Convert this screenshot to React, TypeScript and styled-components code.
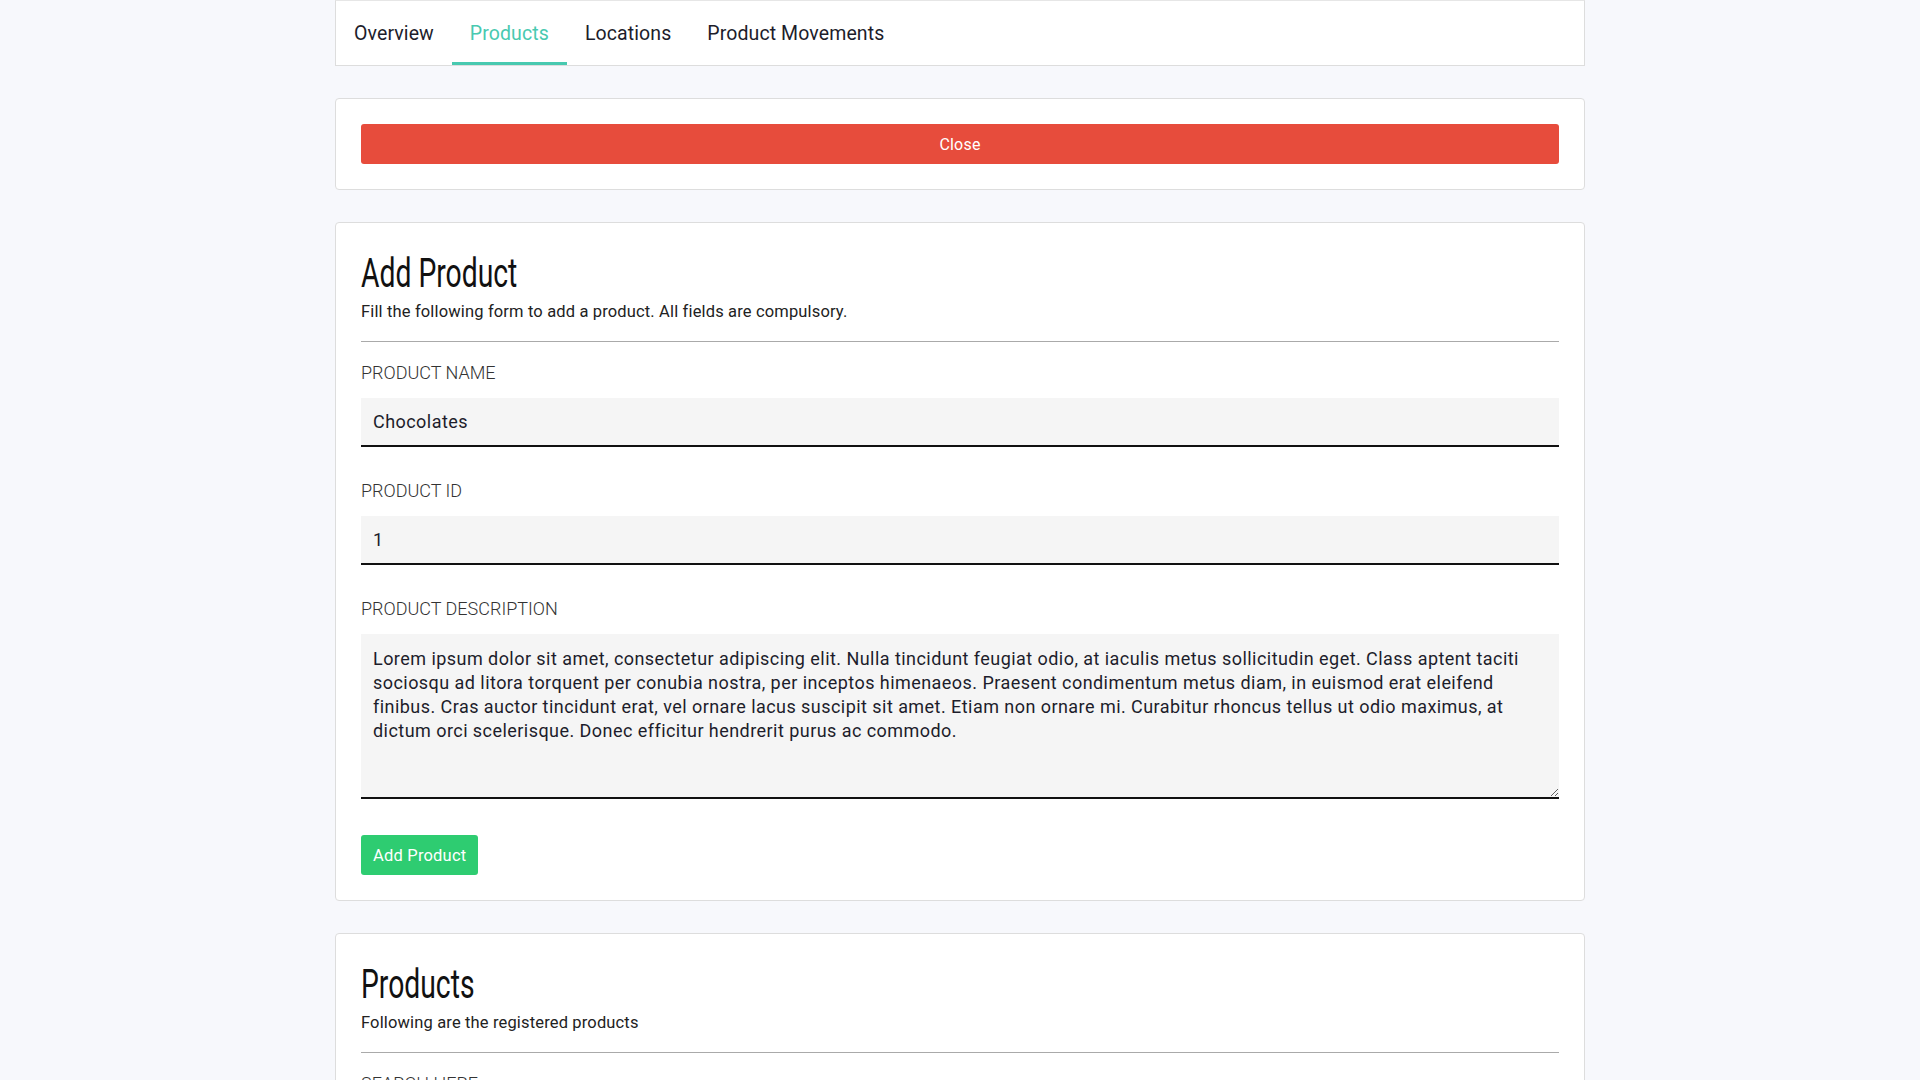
import React from "react";
import styled, { createGlobalStyle } from "styled-components";

const Global = createGlobalStyle`
  html, body {
    margin: 0;
    padding: 0;
    background: #f7f8fc;
    font-family: Roboto, "Noto Sans", sans-serif;
    color: #1d1d2b;
  }
  * { box-sizing: border-box; }
`;

const Page = styled.div`
  width: 1250px;
  margin: 0 auto;
  display: flex;
  flex-direction: column;
  gap: 32px;
  padding-bottom: 40px;
`;

const TabBar = styled.nav`
  height: 66px;
  background: #fff;
  border: 1px solid #dddddd;
  border-top-color: #e6e6e6;
  display: flex;
  align-items: stretch;
`;

const Tab = styled.div<{ $active?: boolean }>`
  padding: 3px 18px 0;
  display: flex;
  align-items: center;
  font-size: 19.5px;
  letter-spacing: 0.1px;
  color: ${(p) => (p.$active ? "#48c9b0" : "#1d1d2b")};
  border-bottom: 3px solid ${(p) => (p.$active ? "#48c9b0" : "transparent")};
  cursor: pointer;
`;

const Card = styled.section`
  background: #fff;
  border: 1px solid #dddddd;
  border-radius: 4px;
  padding: 25px;
  display: flex;
  flex-direction: column;
`;

const CloseButton = styled.button`
  height: 40px;
  width: 100%;
  border: none;
  border-radius: 3px;
  background: #e74c3c;
  color: #fff;
  font-family: Roboto, sans-serif;
  font-size: 16px;
  font-weight: 400;
  letter-spacing: 0.2px;
`;

const Title = styled.h2`
  margin: 3px 0 0;
  font-weight: 400;
  font-size: 41px;
  line-height: 44px;
  color: #111;
  white-space: nowrap;
`;

const TitleText = styled.span`
  display: inline-block;
  transform: scaleX(0.69);
  transform-origin: left center;
`;

const Subtitle = styled.p`
  margin: 7px 0 0;
  font-size: 16.5px;
  letter-spacing: 0.15px;
  line-height: 20px;
  color: #222;
`;

const Divider = styled.hr`
  margin: 19px 0 20px;
  border: none;
  border-top: 1px solid #aaaaaa;
  width: 100%;
`;

const Field = styled.div`
  display: flex;
  flex-direction: column;
  gap: 14px;
  margin-bottom: 33px;
`;

const Label = styled.label`
  font-size: 18px;
  line-height: 22px;
  font-weight: 300;
  color: #333;
  text-transform: uppercase;
`;

const Input = styled.input`
  height: 49px;
  border: none;
  border-bottom: 2px solid #111;
  background: #f5f5f5;
  padding: 0 12px;
  font-family: Roboto, sans-serif;
  font-size: 18px;
  letter-spacing: 0.45px;
  color: #1d1d2b;
  outline: none;
`;

const TextArea = styled.textarea`
  height: 165px;
  border: none;
  border-bottom: 2px solid #111;
  background: #f5f5f5;
  padding: 13px 12px;
  font-family: Roboto, sans-serif;
  font-size: 18px;
  letter-spacing: 0.45px;
  line-height: 24px;
  color: #1d1d2b;
  outline: none;
  resize: vertical;
`;

const AddButton = styled.button`
  align-self: flex-start;
  height: 40px;
  padding: 0 12px;
  border: none;
  border-radius: 3px;
  background: #2ecc71;
  color: #fff;
  font-family: Roboto, sans-serif;
  font-size: 16.5px;
  letter-spacing: 0.2px;
  font-weight: 400;
  margin-top: 3px;
`;

const description =
  "Lorem ipsum dolor sit amet, consectetur adipiscing elit. Nulla tincidunt feugiat odio, at iaculis metus sollicitudin eget. Class aptent taciti sociosqu ad litora torquent per conubia nostra, per inceptos himenaeos. Praesent condimentum metus diam, in euismod erat eleifend finibus. Cras auctor tincidunt erat, vel ornare lacus suscipit sit amet. Etiam non ornare mi. Curabitur rhoncus tellus ut odio maximus, at dictum orci scelerisque. Donec efficitur hendrerit purus ac commodo.";

export default function App() {
  return (
    <>
      <Global />
      <Page>
        <TabBar>
          <Tab>Overview</Tab>
          <Tab $active>Products</Tab>
          <Tab>Locations</Tab>
          <Tab>Product Movements</Tab>
        </TabBar>

        <Card>
          <CloseButton>Close</CloseButton>
        </Card>

        <Card>
          <Title>
            <TitleText>Add Product</TitleText>
          </Title>
          <Subtitle>Fill the following form to add a product. All fields are compulsory.</Subtitle>
          <Divider />
          <Field>
            <Label>Product Name</Label>
            <Input defaultValue="Chocolates" />
          </Field>
          <Field>
            <Label>Product ID</Label>
            <Input defaultValue="1" />
          </Field>
          <Field>
            <Label>Product Description</Label>
            <TextArea defaultValue={description} />
          </Field>
          <AddButton>Add Product</AddButton>
        </Card>

        <Card>
          <Title>
            <TitleText>Products</TitleText>
          </Title>
          <Subtitle>Following are the registered products</Subtitle>
          <Divider />
          <Field>
            <Label>Search Here</Label>
            <Input />
          </Field>
        </Card>
      </Page>
    </>
  );
}
